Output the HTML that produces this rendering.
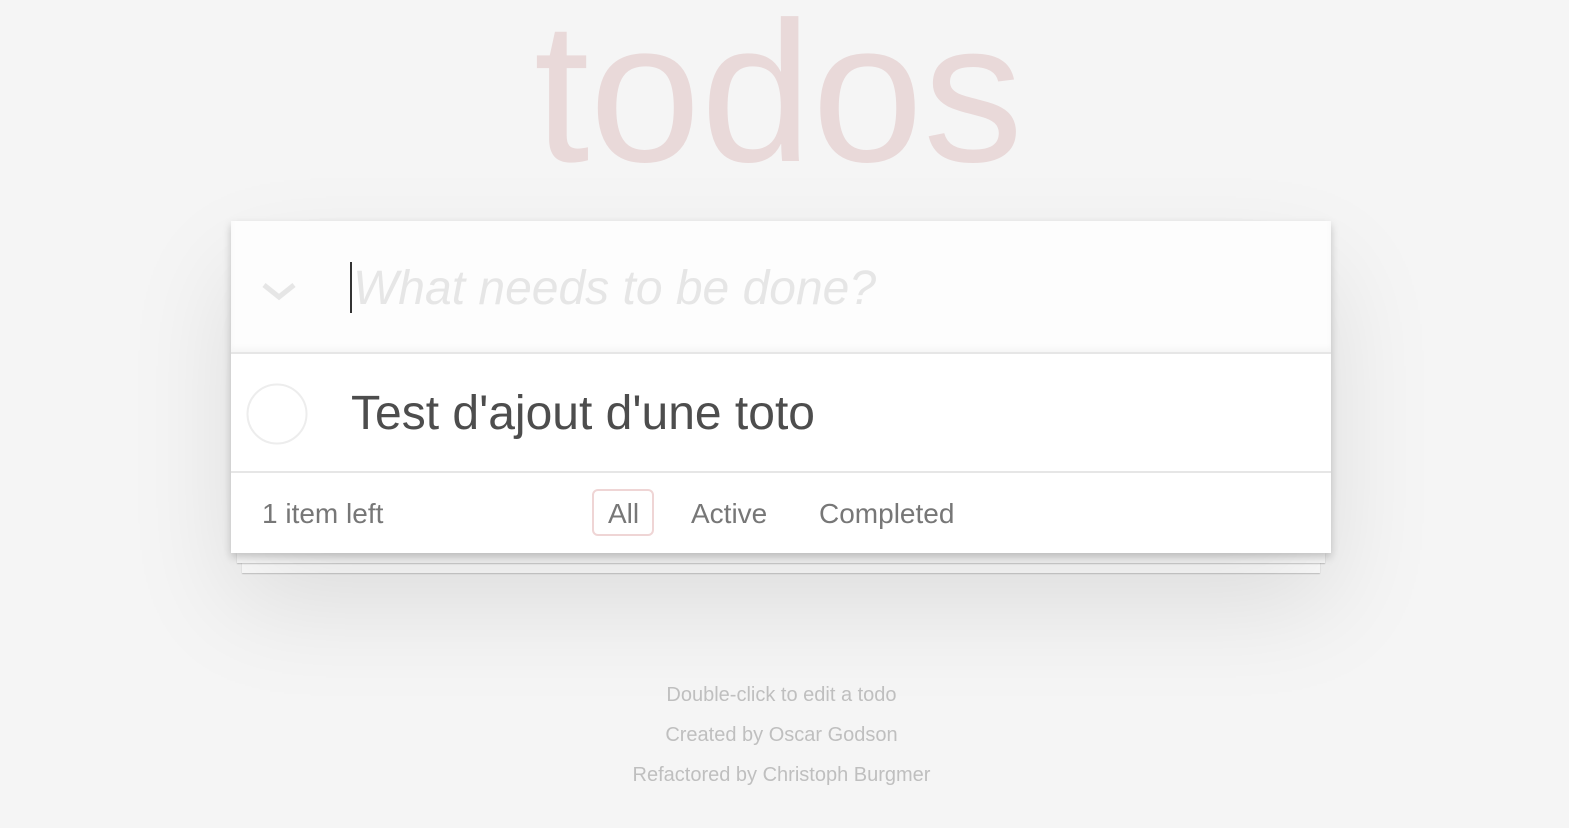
<!DOCTYPE html>
<html><head><meta charset="utf-8"><style>
html,body{margin:0;padding:0;width:1569px;height:828px;background:#f5f5f5;overflow:hidden;font-family:"Liberation Sans",Arial,sans-serif;}
.abs{position:absolute;white-space:nowrap;}
h1{position:absolute;margin:0;left:0;width:1557px;text-align:center;top:-7px;font-size:200px;line-height:200px;font-weight:normal;color:#e9d9d9;letter-spacing:0px;}
.paper{position:absolute;background:#fff;}
.app{position:absolute;left:231px;top:221px;width:1100px;height:332px;background:#fff;box-shadow:0 4px 8px rgba(0,0,0,.2),0 50px 100px rgba(0,0,0,.1);}
.hdr{position:absolute;left:0;top:0;width:1100px;height:131px;background:#fdfdfd;box-shadow:inset 0 -4px 6px rgba(0,0,0,.03);}
.line{position:absolute;left:0;width:1100px;height:2px;background:#e6e6e6;}
</style></head><body>
<div class="paper" style="left:242px;top:553px;width:1078px;height:20px;box-shadow:0 1px 1px rgba(0,0,0,.2);"></div>
<div class="paper" style="left:237px;top:553px;width:1088px;height:10px;box-shadow:0 1px 1px rgba(0,0,0,.2);"></div>
<h1>todos</h1>
<div class="app">
 <div class="hdr"></div>
 <svg class="abs" style="left:30px;top:59px" width="36" height="24" viewBox="0 0 36 24"><path d="M3 5 L18 17 L33 5" fill="none" stroke="#e6e6e6" stroke-width="5"/></svg>
 <div class="abs" style="left:119px;top:41px;width:2px;height:51px;background:#333"></div>
 <div class="abs" style="left:122px;top:40px;font-size:48px;line-height:56px;font-style:italic;color:#e6e6e6">What needs to be done?</div>
 <div class="line" style="top:131px"></div>
 <svg class="abs" style="left:15px;top:162px" width="62" height="62"><circle cx="31" cy="31" r="29.5" fill="none" stroke="#ededed" stroke-width="2"/></svg>
 <div class="abs" style="left:120px;top:165px;font-size:48px;line-height:56px;color:#4d4d4d">Test d'ajout d'une toto</div>
 <div class="line" style="top:250px"></div>
 <div class="abs" style="left:31px;top:277px;font-size:28px;line-height:32px;color:#777">1 item left</div>
 <div class="abs" style="left:361px;top:268px;width:58px;height:43px;border:2px solid #efd5d5;border-radius:6px"></div>
 <div class="abs" style="left:377px;top:277px;font-size:28px;line-height:32px;color:#777">All</div>
 <div class="abs" style="left:460px;top:277px;font-size:28px;line-height:32px;color:#777">Active</div>
 <div class="abs" style="left:588px;top:277px;font-size:28px;line-height:32px;color:#777">Completed</div>
</div>
<div class="abs" style="left:0;width:1563px;text-align:center;top:683px;font-size:20px;line-height:24px;color:#bfbfbf">Double-click to edit a todo</div>
<div class="abs" style="left:0;width:1563px;text-align:center;top:723px;font-size:20px;line-height:24px;color:#bfbfbf">Created by Oscar Godson</div>
<div class="abs" style="left:0;width:1563px;text-align:center;top:763px;font-size:20px;line-height:24px;color:#bfbfbf">Refactored by Christoph Burgmer</div>
</body></html>
